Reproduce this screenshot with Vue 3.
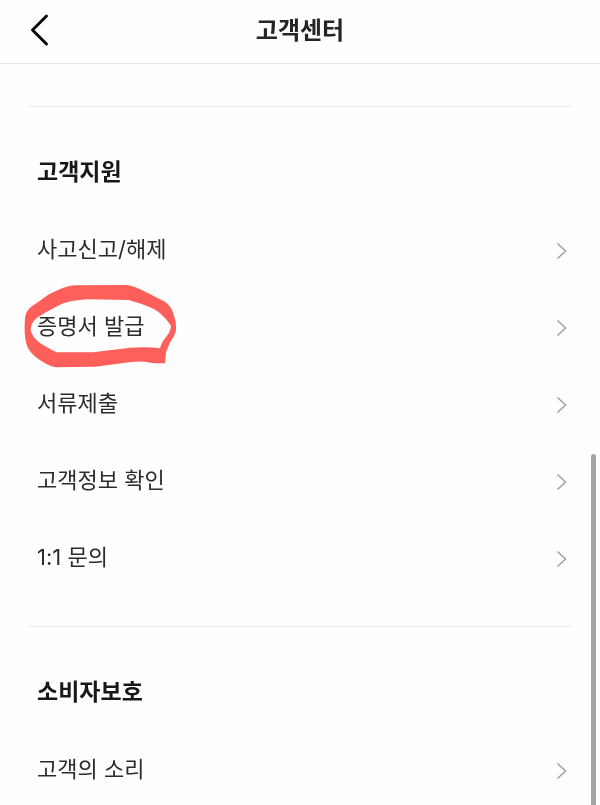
<script setup>
const sections = [
  {
    title: '고객지원',
    items: [
      { label: '사고신고/해제' },
      { label: '증명서 발급', marked: true },
      { label: '서류제출' },
      { label: '고객정보 확인' },
      { label: '1:1 문의' },
    ],
  },
  { title: '소비자보호', items: [{ label: '고객의 소리' }] },
]
</script>

<template>
  <div class="screen">
    <header class="bar">
      <button class="back" type="button" aria-label="뒤로">
        <svg width="20" height="34" viewBox="0 0 20 34">
          <path d="M17.500 3 3.500 17 17.500 31" />
        </svg>
      </button>
      <h1>고객센터</h1>
    </header>
    <main>
      <section v-for="section in sections" :key="section.title">
        <h2>{{ section.title }}</h2>
        <ul>
          <li v-for="item in section.items" :key="item.label">
            <a href="#">
              <span>{{ item.label }}</span>
              <svg class="chevron" width="12" height="18" viewBox="0 0 12 18">
                <path d="M2.500 1.500 10.500 9 2.500 16.500" />
              </svg>
            </a>
            <svg v-if="item.marked" class="marker" viewBox="0 0 525 300" aria-hidden="true">
              <path
                fill-rule="evenodd"
                d="M30 130C32 112 40 101 52 93L102 58Q155 31 180 31L335 30Q350 31 385 47L450 80Q470 93 477 122Q486 145 482 170Q478 183 465 202L453 232L450 265L415 265Q390 257 355 260L240 275L125 277Q105 276 70 252Q43 232 36 212Q26 185 30 130Z
                M66 128Q46 145 47 165Q50 185 76 205Q105 223 125 232L235 232L345 218Q400 214 435 220Q439 201 454 185Q466 171 468 154Q459 135 430 110Q400 91 340 75L215 73Q170 76 145 85Q110 101 66 128Z"
              />
            </svg>
          </li>
        </ul>
      </section>
    </main>
    <div class="scroll-thumb"></div>
  </div>
</template>

<style>
body {
  background: #fefefe;
}
</style>

<style scoped>
.screen {
  position: relative;
  height: 100vh;
  overflow: hidden;
  background: #fefefe;
  color: #2c2c2c;
  font-family: Inter, "Noto Sans CJK KR", sans-serif;
}
.bar {
  display: grid;
  grid-template-columns: 80px 1fr 80px;
  align-items: center;
  height: 63px;
  border-bottom: 1px solid #e8e8e8;
}
.back {
  display: flex;
  align-items: center;
  height: 60px;
  margin: 0;
  padding: 0 0 4px 29px;
  border: 0;
  background: none;
}
.back path {
  fill: none;
  stroke: #080808;
  stroke-width: 3;
  stroke-linecap: round;
  stroke-linejoin: round;
}
h1 {
  margin: 0;
  padding-bottom: 2px;
  font-size: 24px;
  line-height: 32px;
  font-weight: 700;
  text-align: center;
  color: #252525;
}
main {
  padding-top: 42px;
}
section {
  margin: 0 28px;
  padding-bottom: 29px;
  border-top: 1px solid #ededed;
}
h2 {
  margin: 0;
  padding: 49px 9px 24px;
  font-size: 23px;
  line-height: 32px;
  font-weight: 700;
  color: #181818;
}
ul {
  margin: 0;
  padding: 0;
  list-style: none;
}
li {
  position: relative;
}
a {
  display: flex;
  align-items: center;
  justify-content: space-between;
  height: 77px;
  padding: 0 5px 0 9px;
  color: inherit;
  font-size: 22px;
  line-height: 32px;
  text-decoration: none;
}
a span {
  padding-bottom: 4px;
}
.chevron path {
  fill: none;
  stroke: #a0a0a0;
  stroke-width: 1.5;
}
.marker {
  position: absolute;
  left: -13px;
  top: -14px;
  width: 175px;
  height: 100px;
  fill: #fe5f5a;
  mix-blend-mode: multiply;
  pointer-events: none;
}
.scroll-thumb {
  position: absolute;
  top: 454px;
  right: 4px;
  bottom: 0;
  width: 5px;
  border-radius: 3px 3px 0 0;
  background: #a5a5a5;
}
</style>
